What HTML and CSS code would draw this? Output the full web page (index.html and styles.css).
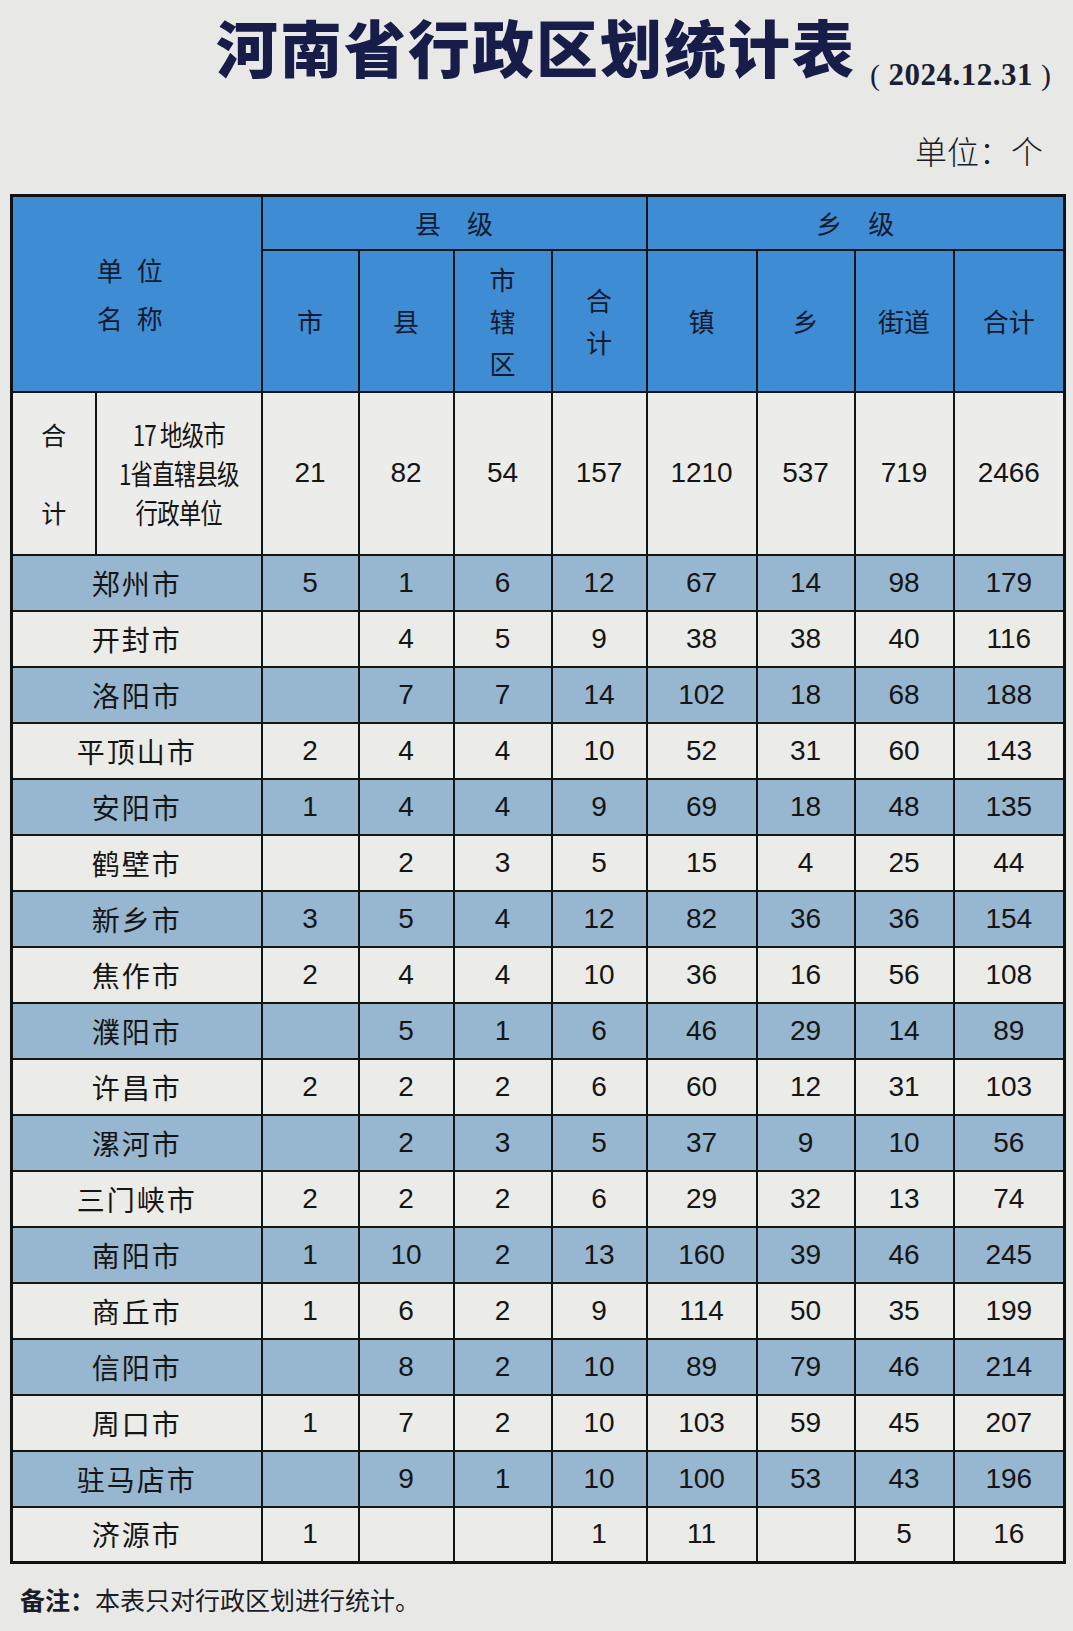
FILE: index.html
```html
<!DOCTYPE html>
<html lang="zh-CN">
<head>
<meta charset="utf-8">
<title>河南省行政区划统计表</title>
<link rel="stylesheet" href="styles.css">
</head>
<body>
<div class="page">
  <header class="head">
    <h1 class="title">河南省行政区划统计表</h1>
    <span class="date"><span class="paren">(</span>2024.12.31<span class="paren">)</span></span>
  </header>
  <div class="unit">单位：个</div>
  <table class="stats">
    <colgroup>
      <col class="c-a"><col class="c-b">
      <col class="c1"><col class="c2"><col class="c3"><col class="c4">
      <col class="c5"><col class="c6"><col class="c7"><col class="c8">
    </colgroup>
    <thead>
      <tr class="h1">
        <th colspan="2" rowspan="2" class="namehead"><span>单 位</span><span>名 称</span></th>
        <th colspan="4">县　级</th>
        <th colspan="4">乡　级</th>
      </tr>
      <tr class="h2">
        <th>市</th>
        <th>县</th>
        <th class="stack">市<br>辖<br>区</th>
        <th class="stack">合<br>计</th>
        <th>镇</th>
        <th>乡</th>
        <th>街道</th>
        <th>合计</th>
      </tr>
    </thead>
    <tbody>
      <tr class="total">
        <td class="sum"><span>合</span><span>计</span></td>
        <td class="desc"><span class="narrow">17 地级市<br>1省直辖县级<br>行政单位</span></td>
        <td>21</td><td>82</td><td>54</td><td>157</td><td>1210</td><td>537</td><td>719</td><td>2466</td>
      </tr>
      <tr class="b"><td colspan="2" class="name">郑州市</td><td>5</td><td>1</td><td>6</td><td>12</td><td>67</td><td>14</td><td>98</td><td>179</td></tr>
      <tr class="w"><td colspan="2" class="name">开封市</td><td></td><td>4</td><td>5</td><td>9</td><td>38</td><td>38</td><td>40</td><td>116</td></tr>
      <tr class="b"><td colspan="2" class="name">洛阳市</td><td></td><td>7</td><td>7</td><td>14</td><td>102</td><td>18</td><td>68</td><td>188</td></tr>
      <tr class="w"><td colspan="2" class="name">平顶山市</td><td>2</td><td>4</td><td>4</td><td>10</td><td>52</td><td>31</td><td>60</td><td>143</td></tr>
      <tr class="b"><td colspan="2" class="name">安阳市</td><td>1</td><td>4</td><td>4</td><td>9</td><td>69</td><td>18</td><td>48</td><td>135</td></tr>
      <tr class="w"><td colspan="2" class="name">鹤壁市</td><td></td><td>2</td><td>3</td><td>5</td><td>15</td><td>4</td><td>25</td><td>44</td></tr>
      <tr class="b"><td colspan="2" class="name">新乡市</td><td>3</td><td>5</td><td>4</td><td>12</td><td>82</td><td>36</td><td>36</td><td>154</td></tr>
      <tr class="w"><td colspan="2" class="name">焦作市</td><td>2</td><td>4</td><td>4</td><td>10</td><td>36</td><td>16</td><td>56</td><td>108</td></tr>
      <tr class="b"><td colspan="2" class="name">濮阳市</td><td></td><td>5</td><td>1</td><td>6</td><td>46</td><td>29</td><td>14</td><td>89</td></tr>
      <tr class="w"><td colspan="2" class="name">许昌市</td><td>2</td><td>2</td><td>2</td><td>6</td><td>60</td><td>12</td><td>31</td><td>103</td></tr>
      <tr class="b"><td colspan="2" class="name">漯河市</td><td></td><td>2</td><td>3</td><td>5</td><td>37</td><td>9</td><td>10</td><td>56</td></tr>
      <tr class="w"><td colspan="2" class="name">三门峡市</td><td>2</td><td>2</td><td>2</td><td>6</td><td>29</td><td>32</td><td>13</td><td>74</td></tr>
      <tr class="b"><td colspan="2" class="name">南阳市</td><td>1</td><td>10</td><td>2</td><td>13</td><td>160</td><td>39</td><td>46</td><td>245</td></tr>
      <tr class="w"><td colspan="2" class="name">商丘市</td><td>1</td><td>6</td><td>2</td><td>9</td><td>114</td><td>50</td><td>35</td><td>199</td></tr>
      <tr class="b"><td colspan="2" class="name">信阳市</td><td></td><td>8</td><td>2</td><td>10</td><td>89</td><td>79</td><td>46</td><td>214</td></tr>
      <tr class="w"><td colspan="2" class="name">周口市</td><td>1</td><td>7</td><td>2</td><td>10</td><td>103</td><td>59</td><td>45</td><td>207</td></tr>
      <tr class="b"><td colspan="2" class="name">驻马店市</td><td></td><td>9</td><td>1</td><td>10</td><td>100</td><td>53</td><td>43</td><td>196</td></tr>
      <tr class="w"><td colspan="2" class="name">济源市</td><td>1</td><td></td><td></td><td>1</td><td>11</td><td></td><td>5</td><td>16</td></tr>
    </tbody>
  </table>
  <p class="note"><b>备注：</b>本表只对行政区划进行统计。</p>
</div>
</body>
</html>
```

FILE: styles.css
```css
html, body {
  margin: 0;
  padding: 0;
  background: #e8e9e7;
}

.page {
  width: 1073px;
  height: 1631px;
  box-sizing: border-box;
  padding: 10px 10px 0 10px;
  font-family: "Liberation Sans", "Noto Sans CJK SC", sans-serif;
  color: #1b1d26;
}

.head {
  display: flex;
  align-items: flex-end;
  padding-left: 206px;
  height: 72px;
}

.title {
  margin: 0;
  font-family: "Noto Sans CJK SC", sans-serif;
  font-weight: 900;
  font-size: 62px;
  line-height: 72px;
  letter-spacing: 2px;
  color: #171c48;
}

.date {
  font-family: "Liberation Serif", "Noto Sans CJK SC", serif;
  font-weight: bold;
  font-size: 31px;
  line-height: 30px;
  margin-left: 14px;
  margin-bottom: -8px;
  color: #1c1f33;
  letter-spacing: 0.5px;
}

.paren {
  font-weight: normal;
  font-size: 30px;
}
.paren:first-child { margin-right: 8px; }
.paren:last-child { margin-left: 8px; }

.unit {
  text-align: right;
  font-family: "Noto Sans CJK SC", sans-serif;
  font-weight: 300;
  font-size: 32px;
  line-height: 40px;
  padding-right: 20px;
  margin-top: 48px;
  height: 64px;
  color: #1b1d26;
}

.stats {
  border-collapse: collapse;
  table-layout: fixed;
  width: 1053px;
  border: 3px solid #111;
}

.c-a { width: 84px; }
.c-b { width: 166px; }
.c1 { width: 97px; }
.c2 { width: 95px; }
.c3 { width: 98px; }
.c4 { width: 95px; }
.c5 { width: 110px; }
.c6 { width: 98px; }
.c7 { width: 99px; }
.c8 { width: 111px; }

.stats th,
.stats td {
  border: 2px solid #141414;
  padding: 0;
  text-align: center;
  vertical-align: middle;
}

.stats th {
  background: #3e8cd3;
  font-family: "Noto Sans CJK SC", sans-serif;
  font-weight: 400;
  font-size: 26px;
  color: #141a30;
}

.h1 { height: 54px; }
.h2 { height: 142px; }

.namehead span {
  display: block;
  line-height: 48px;
  letter-spacing: 4px;
  margin-left: -10px;
}

.stack {
  line-height: 42px;
}

.stats td {
  font-size: 28px;
  color: #151515;
}

.total { height: 163px; }
.total td { background: #ececea; }

.sum span {
  display: block;
  font-family: "Noto Sans CJK SC", sans-serif;
  font-size: 25px;
  line-height: 40px;
}
.sum span + span { margin-top: 38px; }

.desc {
  font-family: "Noto Sans CJK SC", sans-serif;
  font-size: 25px;
  line-height: 39px;
  letter-spacing: -1px;
}

.narrow {
  display: inline-block;
  transform: scaleX(0.8);
}

.stats tbody tr.b,
.stats tbody tr.w { height: 56px; }

.b td { background: #97b6cf; }
.w td { background: #ebebe7; }

.name {
  font-family: "Noto Sans CJK SC", sans-serif;
  font-size: 25px;
  letter-spacing: 2px;
}

.note {
  margin: 18px 0 0 10px;
  font-family: "Noto Sans CJK SC", sans-serif;
  font-size: 25px;
  line-height: 34px;
  color: #1b1d26;
}
.note b { font-weight: 700; }
```
